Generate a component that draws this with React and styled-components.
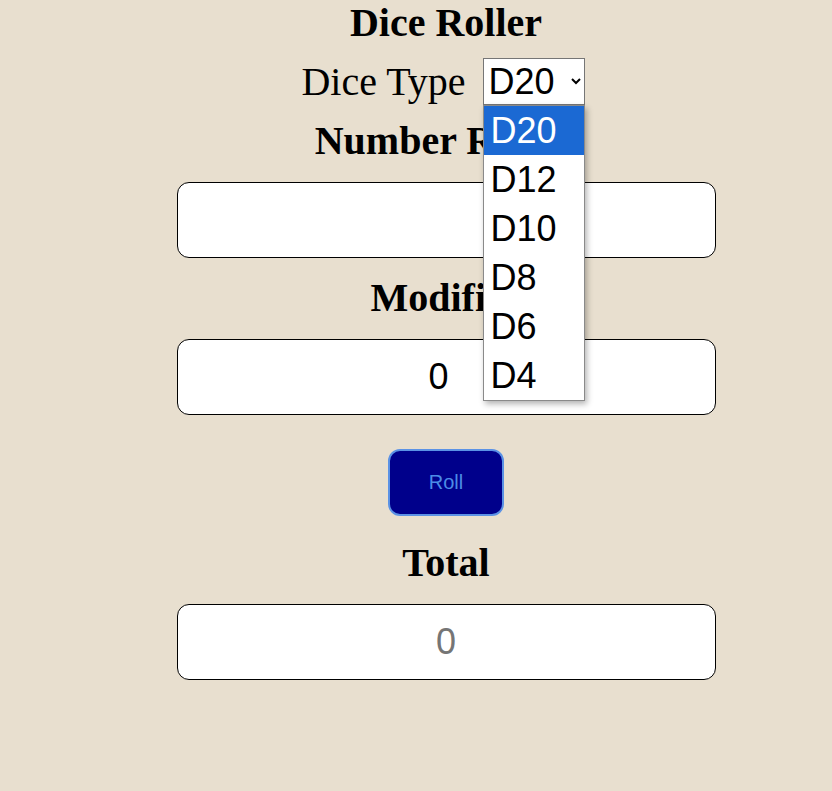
import React, { useState } from 'react';
import styled, { createGlobalStyle } from 'styled-components';

const GlobalStyle = createGlobalStyle`
  html, body {
    margin: 0;
    padding: 0;
    background-color: #e8dfcf;
  }
`;

const Page = styled.div`
  min-height: 791px;
  padding-left: 60px;
  display: flex;
  flex-direction: column;
  align-items: center;
  font-family: "Liberation Serif", "Times New Roman", serif;
  color: #000;
`;

const Title = styled.h1`
  margin: 0;
  font-size: 40px;
  line-height: 46px;
  font-weight: bold;
`;

const DiceRow = styled.div`
  margin: 12px 6px -4px 0;
  display: flex;
  align-items: center;
  gap: 17px;
`;

const Label = styled.label`
  font-size: 40px;
  line-height: 46px;
`;

const SelectWrap = styled.div`
  position: relative;
`;

const Select = styled.select`
  height: 47px;
  width: 102px;
  font-family: "Liberation Sans", Arial, sans-serif;
  font-size: 36px;
  border: 1px solid #767676;
  border-radius: 0;
  background: #fff;
  color: #000;
  padding: 0 0 0 1px;
`;

const Dropdown = styled.ul`
  position: absolute;
  top: 100%;
  left: 0;
  width: 102px;
  margin: 0;
  padding: 0;
  list-style: none;
  box-sizing: border-box;
  background: #fff;
  border: 1px solid #8a8a8a;
  box-shadow: 2px 3px 6px rgba(0, 0, 0, 0.3);
  z-index: 10;
`;

const Option = styled.li`
  height: 49px;
  line-height: 49px;
  padding-left: 7px;
  font-family: "Liberation Sans", Arial, sans-serif;
  font-size: 36px;
  background: ${(p) => (p.$active ? '#1b69d3' : '#fff')};
  color: ${(p) => (p.$active ? '#fff' : '#000')};
`;

const Heading = styled.h2`
  margin: 17px 0 18px;
  font-size: 40px;
  line-height: 46px;
  font-weight: bold;
`;

const Field = styled.input`
  box-sizing: border-box;
  width: 539px;
  height: 76px;
  margin: 0;
  border: 1px solid #000;
  border-radius: 12px;
  background: #fff;
  text-align: center;
  font-family: "Liberation Sans", Arial, sans-serif;
  font-size: 36px;
  color: #000;
  outline: none;

  &::placeholder {
    color: #757575;
  }
`;

const RollButton = styled.button`
  margin: 34px 0 7px;
  width: 116px;
  height: 67px;
  background: #00008b;
  border: 2px solid #5b92e5;
  border-radius: 12px;
  color: #4c8ce6;
  font-family: "Liberation Sans", Arial, sans-serif;
  font-size: 20px;
  cursor: pointer;
`;

const diceTypes = ['D20', 'D12', 'D10', 'D8', 'D6', 'D4'];

export default function App() {
  const [dice, setDice] = useState('D20');
  const [count, setCount] = useState('');
  const [modifier, setModifier] = useState('0');

  return (
    <>
      <GlobalStyle />
      <Page>
        <Title>Dice Roller</Title>
        <DiceRow>
          <Label htmlFor="dice">Dice Type</Label>
          <SelectWrap>
            <Select id="dice" value={dice} onChange={(e) => setDice(e.target.value)}>
              {diceTypes.map((d) => (
                <option key={d} value={d}>{d}</option>
              ))}
            </Select>
            <Dropdown>
              {diceTypes.map((d) => (
                <Option key={d} $active={d === dice} onClick={() => setDice(d)}>
                  {d}
                </Option>
              ))}
            </Dropdown>
          </SelectWrap>
        </DiceRow>
        <Heading>Number Rolled</Heading>
        <Field type="number" value={count} onChange={(e) => setCount(e.target.value)} />
        <Heading>Modifier</Heading>
        <Field type="number" value={modifier} onChange={(e) => setModifier(e.target.value)} />
        <RollButton>Roll</RollButton>
        <Heading>Total</Heading>
        <Field readOnly placeholder="0" />
      </Page>
    </>
  );
}
